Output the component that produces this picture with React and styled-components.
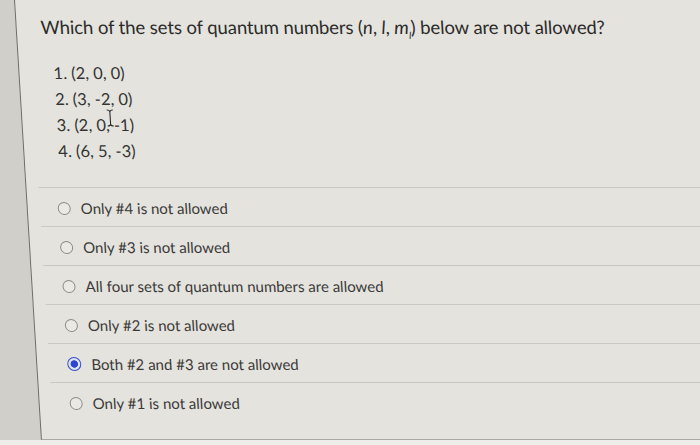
import styled, { createGlobalStyle } from 'styled-components';

const GlobalStyle = createGlobalStyle`
  html, body {
    margin: 0;
    padding: 0;
    background: #d1cfca;
  }
  body {
    font-family: Lato, "Open Sans", sans-serif;
    color: #2f2f2f;
  }
`;

const Screen = styled.div`
  width: 700px;
  height: 445px;
  display: flex;
  flex-direction: column;
  overflow: hidden;
  background: #d1cfca;
`;

const Body = styled.div`
  flex: 1;
  display: flex;
  min-height: 0;
`;

const BottomStrip = styled.div`
  height: 5px;
  background: #eeede9;
`;

const Card = styled.div`
  flex: 1;
  margin-left: 14px;
  margin-right: -40px;
  background: #e5e3dd;
  border-left: 1px solid #6d6c68;
  border-bottom: 1px solid #a9a8a3;
  transform: skewX(3.5deg);
  transform-origin: top left;
  padding-top: 16px;
  display: flex;
  flex-direction: column;
`;

const Question = styled.h1`
  margin: 0 0 14px 24px;
  font-size: 18.5px;
  line-height: 22px;
  font-weight: 400;
  color: #2b2b2b;
  letter-spacing: -0.1px;

  em {
    font-style: italic;
  }
  sub {
    font-size: 10px;
    font-style: italic;
  }
`;

const SetList = styled.ol`
  margin: 0 0 23px 34px;
  padding: 0;
  list-style: none;
`;

const SetItem = styled.li`
  position: relative;
  font-size: 16.5px;
  line-height: 26px;
  color: #333;
`;

const Cursor = styled.svg`
  position: absolute;
  left: 50px;
  top: -3px;
`;

const Options = styled.div`
  margin-left: 12px;
  display: flex;
  flex-direction: column;
`;

const Option = styled.label`
  display: flex;
  align-items: center;
  gap: 10px;
  height: 39px;
  box-sizing: border-box;
  padding: 3px 0 0 18px;
  border-top: 1px solid #cac8c2;
  font-size: 15px;
  color: #3a3a3a;
`;

const Radio = styled.span`
  width: ${({ $checked }) => ($checked ? '14px' : '13px')};
  height: ${({ $checked }) => ($checked ? '14px' : '13px')};
  border-radius: 50%;
  box-sizing: border-box;
  flex: none;
  border: ${({ $checked }) => ($checked ? '1.5px solid #3550c8' : '1.5px solid #8c8b87')};
  background: ${({ $checked }) =>
    $checked
      ? 'radial-gradient(circle, #2c47d4 0 3.4px, #dfe3f4 4px 100%)'
      : '#ebe9e4'};
`;

const sets = ['1. (2, 0, 0)', '2. (3, -2, 0)', '3. (2, 0, -1)', '4. (6, 5, -3)'];

const answers = [
  'Only #4 is not allowed',
  'Only #3 is not allowed',
  'All four sets of quantum numbers are allowed',
  'Only #2 is not allowed',
  'Both #2 and #3 are not allowed',
  'Only #1 is not allowed',
];

export default function App() {
  return (
    <>
      <GlobalStyle />
      <Screen>
        <Body>
          <Card>
            <Question>
              Which of the sets of quantum numbers (<em>n</em>, <em>l</em>, <em>m</em>
              <sub>l</sub>) below are not allowed?
            </Question>
            <SetList>
              {sets.map((s, i) => (
                <SetItem key={s}>
                  {s}
                  {i === 2 && (
                    <Cursor width="8" height="18" viewBox="0 0 8 18">
                      <path
                        d="M1 1 Q4 1 4 3 L4 15 Q4 17 1 17 M7 1 Q4 1 4 3 M4 15 Q4 17 7 17"
                        fill="none"
                        stroke="#2a2a2a"
                        strokeWidth="1.1"
                      />
                    </Cursor>
                  )}
                </SetItem>
              ))}
            </SetList>
            <Options>
              {answers.map((a, i) => (
                <Option key={a}>
                  <Radio $checked={i === 4} />
                  {a}
                </Option>
              ))}
            </Options>
          </Card>
        </Body>
        <BottomStrip />
      </Screen>
    </>
  );
}
